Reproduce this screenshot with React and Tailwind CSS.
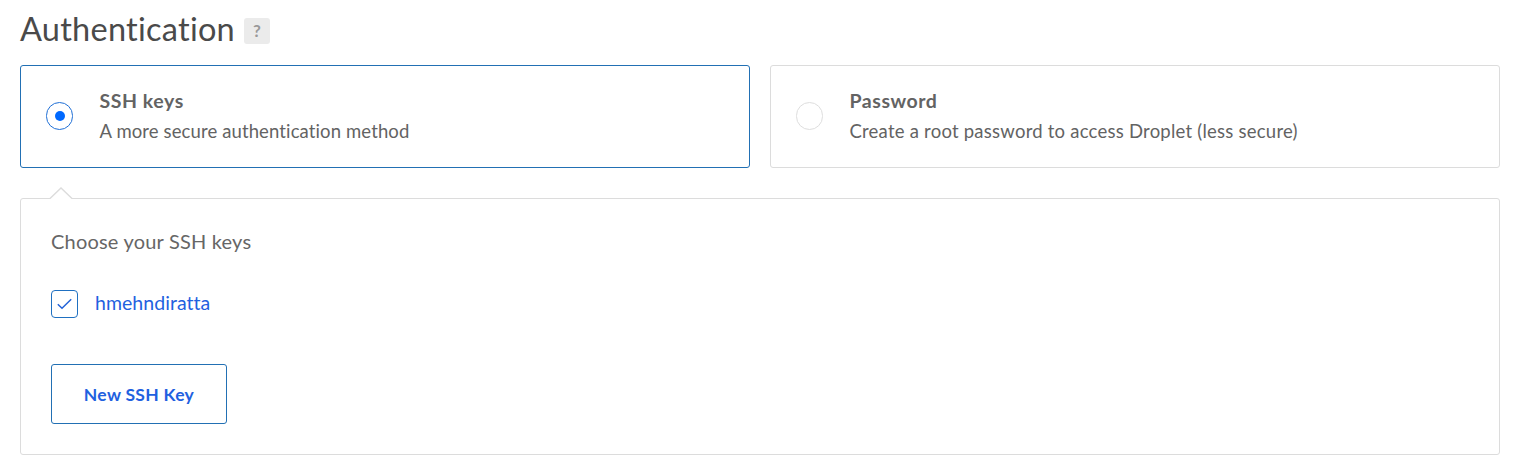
import React from 'react';

const methods = [
  {
    id: 'ssh',
    title: 'SSH keys',
    description: 'A more secure authentication method',
    descriptionClass: 'tracking-[0.12px]',
  },
  {
    id: 'password',
    title: 'Password',
    description: 'Create a root password to access Droplet (less secure)',
    descriptionClass: 'tracking-[0.23px]',
  },
];

const MethodCard = ({ method, selected }) => (
  <button
    type="button"
    className={`flex h-[103px] items-center rounded-[3px] border pb-0.5 pl-[25px] text-left ${
      selected ? 'border-[#2270b4]' : 'border-[#dcdcdc]'
    }`}
  >
    <span
      className={`flex h-7 w-[27px] shrink-0 items-center justify-center rounded-full border ${
        selected ? 'border-[#1f6fd6]' : 'border-[#dedede]'
      }`}
    >
      {selected && <span className="h-2.5 w-2.5 rounded-full bg-[#0069ff]" />}
    </span>
    <span className="flex flex-col pl-[26.5px] text-[#636363]">
      <span className="h-[29px] text-[19.5px] leading-[29px] font-bold tracking-[0.55px] whitespace-nowrap">
        {method.title}
      </span>
      <span className={`h-[30px] text-[18.5px] leading-8 whitespace-nowrap ${method.descriptionClass}`}>
        {method.description}
      </span>
    </span>
  </button>
);

const KeysPanel = () => (
  <div className="relative mt-[30px] h-[257px] rounded-[3px] border border-[#dcdcdc] pl-[30px]">
    {/* pointer up to the selected card */}
    <svg className="absolute -top-[12px] left-[28px]" width="24" height="13" viewBox="0 0 24 13" fill="none">
      <path d="M1 12 L12 1 L23 12 V13 H1 Z" fill="#fff" />
      <path d="M1 11.5 L12 1 L23 11.5" stroke="#dcdcdc" strokeWidth="1.4" />
    </svg>
    <p className="pt-[27px] text-[20px] leading-[30px] tracking-[0.2px] text-[#666]">Choose your SSH keys</p>
    <label className="mt-[34px] flex h-7 items-center">
      <span className="flex h-7 w-[27px] items-center justify-center rounded-[4px] border border-[#1f70c1]">
        <svg width="15" height="12" viewBox="0 0 15 12" fill="none">
          <path d="M0.8 6.2 L5 10.2 L14.2 1.2" stroke="#2463d8" strokeWidth="1.5" />
        </svg>
      </span>
      <span className="pb-0.5 pl-[17px] text-[19.5px] leading-7 tracking-[0.05px] text-[#1f61e0]">hmehndiratta</span>
    </label>
    <button
      type="button"
      className="mt-[46px] flex h-[60px] w-[176px] items-center justify-center rounded-[3px] border border-[#2270b4] pt-0.5 text-[17.5px] font-bold tracking-[0.3px] text-[#1f61e0]"
    >
      New SSH Key
    </button>
  </div>
);

const App = () => (
  <main className="h-[469px] w-[1527px] bg-white pl-5 font-['Lato','Liberation_Sans',sans-serif]">
    <div className="w-[1480px]">
      <header className="flex h-[65px] items-start pt-[7px]">
        <h1 className="w-[224px] text-[32.5px] leading-[43px] tracking-[0.25px] whitespace-nowrap text-[#4a4a4a]">
          Authentication
        </h1>
        <span className="mt-[11px] flex h-[26px] w-[26px] items-center justify-center rounded-[3px] bg-[#ebebeb] text-[17px] font-bold text-[#999]">
          ?
        </span>
      </header>
      <div className="grid grid-cols-2 gap-5">
        {methods.map((method) => (
          <MethodCard key={method.id} method={method} selected={method.id === 'ssh'} />
        ))}
      </div>
      <KeysPanel />
    </div>
  </main>
);

export default App;
